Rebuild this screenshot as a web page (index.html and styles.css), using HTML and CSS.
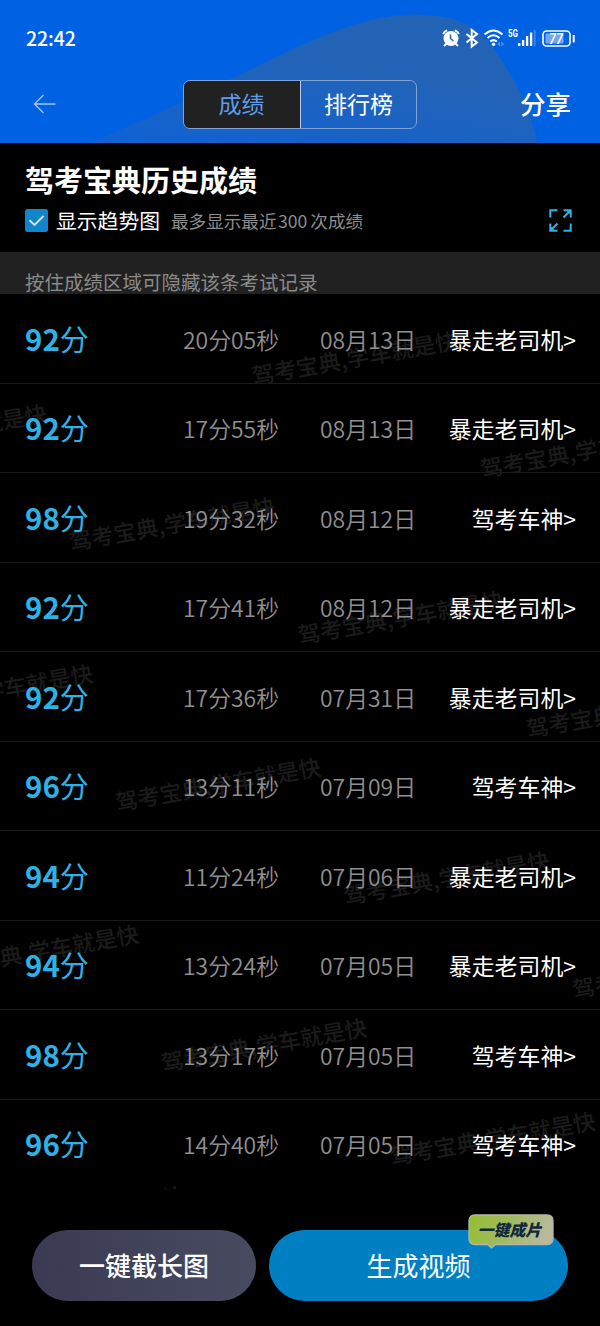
FILE: index.html
```html
<!DOCTYPE html>
<html lang="zh-CN">
<head>
    <meta charset="UTF-8">
    <meta name="viewport" content="width=device-width, initial-scale=1.0">
    <title>驾考宝典历史成绩</title>
    <link rel="stylesheet" href="styles.css">
</head>
<body>
    <div class="header">
        <svg class="header-bg" width="600" height="143" viewBox="0 0 600 143">
            <defs>
                <linearGradient id="hill" x1="0" y1="1" x2="0.45" y2="0.3">
                    <stop offset="0" stop-color="#0f62d5"/>
                    <stop offset="1" stop-color="#2363b6"/>
                </linearGradient>
            </defs>
            <path d="M90 143 C160 114 235 77 300 46 C345 26 382 14 416 14.500 C449 15 472 22 489 43 C511 72 532 108 537 143 Z" fill="url(#hill)"/>
        </svg>
        <div class="status-bar">
            <span class="time">22:42</span>
            <svg width="140" height="26" viewBox="440 25 140 26" fill="none" stroke="#fff">
                <circle cx="451" cy="38.500" r="7.500" fill="#fff" stroke="none"/>
                <path d="M443.200 34.300 q.8-3 4-4 M458.800 34.300 q-.8-3-4-4 M446.500 43.500 l-2.500 2.500 M455.500 43.500 l2.500 2.500" stroke-width="1.900"/>
                <path d="M450.500 34.500 V38.500 L453.500 41" stroke="#1b63c4" stroke-width="1.500"/>
                <path d="M466.500 34 L477 42.500 L471.700 46.500 V30 L477 34 L466.500 42.500" stroke-width="2"/>
                <path d="M484.500 34.500 Q493.500 26.500 502.500 34.500 M487.500 38 Q493.500 32.500 499.500 38 M490.200 41.500 Q493.500 38.700 496.800 41.500" stroke-width="2"/>
                <circle cx="493.500" cy="44.300" r="1.700" fill="#fff" stroke="none"/>
                <path d="M500 41.500 l-2.500 2.500 2.500 2.500z M501.500 41.500 l2.500 2.500 -2.500 2.500z" fill="#6193da" stroke="none"/>
                <text x="508" y="36.700" class="net" textLength="10" lengthAdjust="spacingAndGlyphs">5G</text>
                <path d="M519.200 43 V46 M523.100 40 V46 M527.100 36 V46 M531.100 32.500 V46" stroke-width="2.300"/>
                <path d="M534.700 30 V46" stroke="#3f86ea" stroke-width="1.800"/>
                <rect x="543" y="31" width="27" height="15" rx="3.500" stroke-width="1.600"/>
                <rect x="545.500" y="33.500" width="18" height="10" rx="1" fill="#75a5eb" stroke="none"/>
                <text x="549" y="44" class="battery" textLength="14" lengthAdjust="spacingAndGlyphs">77</text>
                <path d="M573.700 35 V42.500" stroke-width="2"/>
            </svg>
        </div>
        <div class="nav-bar">
            <svg class="back" width="24" height="20" viewBox="0 0 24 20" fill="none" stroke="#a5c7f6" stroke-width="1.300">
                <path d="M22.500 10 H1.500 M10.500 1 L1.500 10 L10.500 19"/>
            </svg>
            <div class="tabs">
                <span class="tab active">成绩</span>
                <span class="tab">排行榜</span>
            </div>
            <span class="share">分享</span>
        </div>
    </div>

    <div class="summary">
        <h1>驾考宝典历史成绩</h1>
        <div class="options">
            <svg class="checkbox" width="23" height="23" viewBox="0 0 23 23">
                <rect width="23" height="23" rx="2.500" fill="#1085cb"/>
                <path d="M4.500 11.300 L9.500 16 L18.500 7" fill="none" stroke="#d3e6f1" stroke-width="1.900"/>
            </svg>
            <span class="option-label">显示趋势图</span>
            <span class="option-note">最多显示最近<span class="num">300</span>次成绩</span>
            <svg class="expand" width="23" height="23" viewBox="0 0 23 23" fill="none" stroke="#2fb1e6" stroke-width="2">
                <path d="M8.500 1.300 H1.300 V8.500 M14.500 1.300 H21.700 V8.500 M21.700 1.300 L14.500 8.500 M1.300 14.500 V21.700 H8.500 M1.300 21.700 L8.500 14.500 M21.700 14.500 V21.700 H14.500"/>
                <path d="M17 1.300 H21.700 V6 Z M1.300 17 V21.700 H6 Z" fill="#2fb1e6" stroke="none"/>
            </svg>
        </div>
    </div>
    <div class="tip">按住成绩区域可隐藏该条考试记录</div>

    <div class="list">
        <svg class="watermark" width="600" height="895" viewBox="0 294 600 895">
            <text transform="translate(253.500 384.500) rotate(-10)">驾考宝典,学车就是快</text>
            <text transform="translate(-157 457.500) rotate(-10)">驾考宝典,学车就是快</text>
            <text transform="translate(482 477.500) rotate(-10)">驾考宝典,学车就是快</text>
            <text transform="translate(71 550.500) rotate(-10)">驾考宝典,学车就是快</text>
            <text transform="translate(299.500 644) rotate(-10)">驾考宝典,学车就是快</text>
            <text transform="translate(-111 717.500) rotate(-10)">驾考宝典,学车就是快</text>
            <text transform="translate(528 737.500) rotate(-10)">驾考宝典,学车就是快</text>
            <text transform="translate(117 811) rotate(-10)">驾考宝典,学车就是快</text>
            <text transform="translate(345.500 904.500) rotate(-10)">驾考宝典,学车就是快</text>
            <text transform="translate(-65 978) rotate(-10)">驾考宝典,学车就是快</text>
            <text transform="translate(574 998) rotate(-10)">驾考宝典,学车就是快</text>
            <text transform="translate(163 1071.500) rotate(-10)">驾考宝典,学车就是快</text>
            <text transform="translate(391.500 1165) rotate(-10)">驾考宝典,学车就是快</text>
            <text transform="translate(-19 1239.500) rotate(-10)">驾考宝典,学车就是快</text>
        </svg>
        <div class="row"><span class="score"><b>92</b>分</span><span class="duration">20分05秒</span><span class="date">08月13日</span><span class="level">暴走老司机&gt;</span></div>
        <div class="row"><span class="score"><b>92</b>分</span><span class="duration">17分55秒</span><span class="date">08月13日</span><span class="level">暴走老司机&gt;</span></div>
        <div class="row"><span class="score"><b>98</b>分</span><span class="duration">19分32秒</span><span class="date">08月12日</span><span class="level">驾考车神&gt;</span></div>
        <div class="row"><span class="score"><b>92</b>分</span><span class="duration">17分41秒</span><span class="date">08月12日</span><span class="level">暴走老司机&gt;</span></div>
        <div class="row"><span class="score"><b>92</b>分</span><span class="duration">17分36秒</span><span class="date">07月31日</span><span class="level">暴走老司机&gt;</span></div>
        <div class="row"><span class="score"><b>96</b>分</span><span class="duration">13分11秒</span><span class="date">07月09日</span><span class="level">驾考车神&gt;</span></div>
        <div class="row"><span class="score"><b>94</b>分</span><span class="duration">11分24秒</span><span class="date">07月06日</span><span class="level">暴走老司机&gt;</span></div>
        <div class="row"><span class="score"><b>94</b>分</span><span class="duration">13分24秒</span><span class="date">07月05日</span><span class="level">暴走老司机&gt;</span></div>
        <div class="row"><span class="score"><b>98</b>分</span><span class="duration">13分17秒</span><span class="date">07月05日</span><span class="level">驾考车神&gt;</span></div>
        <div class="row"><span class="score"><b>96</b>分</span><span class="duration">14分40秒</span><span class="date">07月05日</span><span class="level">驾考车神&gt;</span></div>
    </div>

    <div class="actions">
        <div class="btn btn-capture">一键截长图</div>
        <div class="btn btn-video">生成视频
            <div class="badge">
                <svg class="badge-bg" width="86" height="35" viewBox="0 0 86 35">
                    <defs>
                        <linearGradient id="badge" x1="0" y1="0" x2="1" y2="0.2">
                            <stop offset="0" stop-color="#95bd31"/>
                            <stop offset="0.5" stop-color="#9fbb5c"/>
                            <stop offset="1" stop-color="#bab99b"/>
                        </linearGradient>
                    </defs>
                    <path d="M7 1 H79 Q85 1 85 7 V24.500 Q85 30.500 79 30.500 H27.500 L23.500 34 L19.500 30.500 H7 Q1 30.500 1 24.500 V7 Q1 1 7 1 Z" fill="url(#badge)" stroke="#b3b7aa" stroke-width="1.300"/>
                </svg>
                <span class="badge-text">一键成片</span>
            </div>
        </div>
    </div>
</body>
</html>
```
FILE: styles.css
```css
* {
    box-sizing: border-box;
}
body {
    margin: 0;
    width: 600px;
    height: 1326px;
    overflow: hidden;
    background-color: #000;
    color: #fff;
    font-family: 'Noto Sans CJK SC', sans-serif;
    white-space: nowrap;
}
svg {
    display: block;
    flex-shrink: 0;
}
.header {
    position: relative;
    height: 143px;
    background-color: #0062e3;
}
.header-bg {
    position: absolute;
    top: 0;
    left: 0;
}
.status-bar {
    position: relative;
    display: flex;
    justify-content: space-between;
    align-items: center;
    height: 76px;
    padding: 0 20px 0 26px;
}
.time {
    font-size: 19.5px;
    line-height: 26px;
    font-weight: 500;
    letter-spacing: -0.1px;
}
.net {
    font-family: Roboto, sans-serif;
    font-size: 10px;
    font-weight: bold;
    fill: #fff;
    stroke: none;
}
.battery {
    font-family: Roboto, sans-serif;
    font-size: 15px;
    font-style: italic;
    font-weight: 500;
    fill: #fff;
    stroke: none;
}
.nav-bar {
    position: relative;
    display: grid;
    grid-template-columns: 150px 234px 1fr;
    align-items: center;
    height: 56px;
    padding: 0 29px 0 33px;
}
.tabs {
    display: flex;
    height: 49px;
    border: 1px solid #7fa3d4;
    border-radius: 7px;
    overflow: hidden;
}
.tab {
    flex: 1;
    line-height: 45px;
    text-align: center;
    font-size: 23px;
}
.tab.active {
    flex: 0 0 118px;
    margin: -1px 0 -1px -1px;
    border-right: 1px solid #b5cbed;
    background-color: #212121;
    color: #5b9cec;
    line-height: 47px;
}
.share {
    justify-self: end;
    margin-top: -3px;
    font-size: 25.5px;
    line-height: 38px;
    font-weight: 500;
}
.summary {
    height: 109px;
    padding: 15px 28px 0 25px;
}
h1 {
    margin: 0 0 1px;
    font-size: 29px;
    line-height: 42px;
}
.options {
    display: flex;
    align-items: center;
    height: 38px;
}
.option-label {
    margin-left: 8px;
    font-size: 20.8px;
}
.option-note {
    margin-left: 11px;
    font-size: 17.6px;
    color: #8d8d8d;
}
.num {
    margin: 0 3px 0 1.5px;
}
.expand {
    margin-left: auto;
}
.tip {
    height: 42px;
    padding: 11px 25px 0;
    background-color: #212121;
    font-size: 19.5px;
    line-height: 37px;
    color: #8a8a8a;
}
.list {
    position: relative;
    height: 895px;
}
.watermark {
    position: absolute;
    top: 0;
    left: 0;
    overflow: hidden;
    font-size: 22.4px;
    font-weight: 500;
    fill: #1b1b1b;
}
.row {
    position: relative;
    display: grid;
    grid-template-columns: 158px 137px 1fr auto;
    align-items: center;
    height: 89.5px;
    padding: 1px 24px 0 25px;
    border-bottom: 1px solid #1a1a1a;
    font-size: 22.9px;
}
.row:last-child {
    border-bottom-color: transparent;
}
.score {
    padding-bottom: 2px;
    font-size: 29px;
    color: #2fb1e6;
}
.score b {
    font-size: 29.5px;
}
.duration,
.date {
    font-weight: 350;
    color: #909090;
}
.actions {
    display: flex;
    gap: 13px;
    padding: 41px 32px 0;
}
.btn {
    height: 71px;
    border-radius: 36px;
    line-height: 70px;
    text-align: center;
    font-size: 26px;
}
.btn-capture {
    width: 224px;
    background: linear-gradient(to right, #3b3a54, #474b60);
    font-weight: 500;
}
.btn-video {
    position: relative;
    width: 299px;
    background-color: #007fc3;
}
/* speech bubble sitting on the top right of the button */
.badge {
    position: absolute;
    top: -16px;
    right: 14px;
    width: 86px;
    height: 35px;
}
.badge-bg {
    position: absolute;
    top: 0;
    left: 0;
}
.badge-text {
    position: relative;
    display: block;
    padding-right: 3px;
    font-size: 16px;
    line-height: 31px;
    font-weight: 900;
    font-style: italic;
    color: #10273d;
}
```
